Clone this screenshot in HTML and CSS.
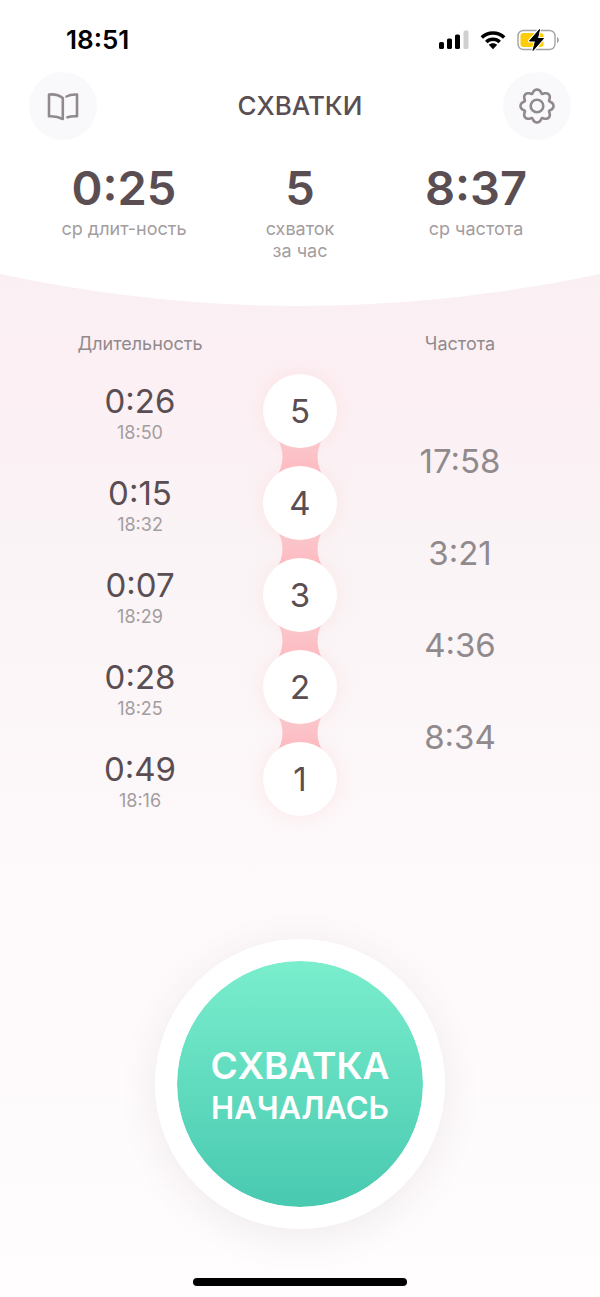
FILE: index.html
```
<!DOCTYPE html>
<html lang="ru">

<head>
    <meta charset="UTF-8">
    <meta name="viewport" content="width=device-width, initial-scale=1.0">
    <title>Схватки</title>
    <link rel="stylesheet" href="styles.css">
</head>

<body>
    <svg class="defs" width="0" height="0" aria-hidden="true">
        <linearGradient id="linkFill" x1="0" y1="0" x2="0" y2="1">
            <stop offset="0" stop-color="#f9cdd2" />
            <stop offset="1" stop-color="#feb9c1" />
        </linearGradient>
        <symbol id="link" viewBox="0 0 50 44">
            <path d="M0 0C10 14 10 30 0 44H50C40 30 40 14 50 0Z" fill="url(#linkFill)" />
        </symbol>
    </svg>

    <header class="header">
        <div class="status-bar">
            <span class="clock">18:51</span>
            <div class="status-icons">
                <svg width="30" height="20" viewBox="0 0 30 20" aria-hidden="true">
                    <rect x="0" y="12" width="5" height="7" rx="1.6" />
                    <rect x="8" y="8.5" width="5" height="10.5" rx="1.6" />
                    <rect x="16" y="4.5" width="5" height="14.5" rx="1.6" />
                    <rect x="24.5" y="0.5" width="5" height="18.5" rx="1.6" fill="#d0d0d0" />
                </svg>
                <svg width="26" height="20" viewBox="0 0 26 20" aria-hidden="true">
                    <path d="M1.8 7.5a16 16 0 0 1 22.4 0M6.3 12a9.6 9.6 0 0 1 13.4 0" fill="none" stroke="#000" stroke-width="3.5" />
                    <path d="M13 13.2c1.7 0 3.2.6 4.2 1.6L13 19.2l-4.2-4.4c1-1 2.5-1.6 4.2-1.6z" />
                </svg>
                <svg width="43" height="22" viewBox="0 0 43 22" aria-hidden="true">
                    <rect x="1" y="1.5" width="37" height="19" rx="5.5" fill="none" stroke="#a3a3a3" stroke-width="1.4" />
                    <path d="M40 8v6c2.4-1 2.4-5 0-6z" fill="#a3a3a3" />
                    <rect x="3.5" y="4" width="23" height="14" rx="3" fill="#ffcc0a" />
                    <path d="M22.5.5L12.5 12h6L16 21.5 26.5 9.5h-6z" stroke="#fff" stroke-width="3" stroke-linejoin="round" />
                    <path d="M22.5.5L12.5 12h6L16 21.5 26.5 9.5h-6z" stroke="#000" stroke-linejoin="round" />
                </svg>
            </div>
        </div>

        <nav class="toolbar">
            <button class="icon-button" aria-label="Справка">
                <svg width="32" height="32" viewBox="0 0 32 32" fill="none" stroke="#918a8d" stroke-width="2.6" stroke-linejoin="round" stroke-linecap="round" aria-hidden="true">
                    <path d="M2 4.5C7 4 12 5 15.8 8v21C12 27 7 26 2 26.3z" />
                    <path d="M19.500 6.500C22 5 26 4.300 30 4.500v21.800c-3.500-.2-6.500 0-9.500 1" />
                </svg>
            </button>
            <h1>СХВАТКИ</h1>
            <button class="icon-button" aria-label="Настройки">
                <svg width="38" height="38" viewBox="-19 -19 38 38" fill="none" stroke="#918a8d" stroke-width="2.6" stroke-linejoin="round" aria-hidden="true">
                    <circle r="6.3" />
                    <path id="gear" d="" />
                </svg>
            </button>
        </nav>

        <section class="stats">
            <div class="stat">
                <strong>0:25</strong>
                <span>ср длит-ность</span>
            </div>
            <div class="stat">
                <strong>5</strong>
                <span>схваток<br>за час</span>
            </div>
            <div class="stat">
                <strong>8:37</strong>
                <span>ср частота</span>
            </div>
        </section>
    </header>
    <svg class="curve" viewBox="0 0 600 32" preserveAspectRatio="none" aria-hidden="true">
        <path d="M0 0Q300 64 600 0Z" fill="#fff" />
    </svg>

    <main>
        <section class="history">
            <h2 class="duration-title">Длительность</h2>
            <h2 class="frequency-title">Частота</h2>

            <ol class="track durations">
                <li><b>0:26</b><time>18:50</time></li>
                <li><b>0:15</b><time>18:32</time></li>
                <li><b>0:07</b><time>18:29</time></li>
                <li><b>0:28</b><time>18:25</time></li>
                <li><b>0:49</b><time>18:16</time></li>
            </ol>

            <ol class="track numbers">
                <li><span>5</span><svg class="link" aria-hidden="true"><use href="#link" /></svg></li>
                <li><span>4</span><svg class="link" aria-hidden="true"><use href="#link" /></svg></li>
                <li><span>3</span><svg class="link" aria-hidden="true"><use href="#link" /></svg></li>
                <li><span>2</span><svg class="link" aria-hidden="true"><use href="#link" /></svg></li>
                <li><span>1</span></li>
            </ol>

            <ol class="track frequencies">
                <li>17:58</li>
                <li>3:21</li>
                <li>4:36</li>
                <li>8:34</li>
            </ol>
        </section>

        <button class="start-button">
            <span class="start-first">СХВАТКА</span>
            <span class="start-second">НАЧАЛАСЬ</span>
        </button>
    </main>

    <div class="home-indicator"></div>

    <script>
        // Eight rounded teeth around the settings wheel
        const points = [];
        for (let i = 0; i < 160; i++) {
            const a = i / 160 * Math.PI * 2;
            const r = 14.8 + 1.7 * Math.cos(a * 8);
            // lean the points outwards so the teeth come out wide and round
            const b = a + 0.05 * Math.sin(a * 8);
            points.push((r * Math.sin(b)).toFixed(2) + ' ' + (-r * Math.cos(b)).toFixed(2));
        }
        document.getElementById('gear').setAttribute('d', 'M' + points.join('L') + 'Z');
    </script>
</body>

</html>
```

FILE: styles.css
```
:root {
    --text: #5a4e53;
    --text-mid: #918a8d;
    --text-dim: #a39d9f;
    --circle: 74px;
    --gap: 18px;
}

* {
    box-sizing: border-box;
    margin: 0;
    padding: 0;
}

body {
    font-family: Inter, 'Liberation Sans', sans-serif;
    color: var(--text);
    min-height: 100vh;
    display: flex;
    flex-direction: column;
    background: linear-gradient(#faeff3 280px, #fcf0f4 390px, #faf4f6 560px, #fdf8fa 850px, #fffdfe);
}

button {
    border: none;
    font-family: inherit;
    cursor: pointer;
}

ol {
    list-style: none;
}

.defs {
    position: absolute;
}

.header {
    background: #fff;
    padding-bottom: 12px;
}

.status-bar {
    display: flex;
    justify-content: space-between;
    align-items: center;
    height: 72px;
    padding: 8px 40px 0 66px;
}

.clock {
    font-size: 26px;
    font-weight: 600;
    line-height: 32px;
    color: #000;
}

.status-icons {
    display: flex;
    align-items: center;
    gap: 11px;
}

.toolbar {
    display: flex;
    justify-content: space-between;
    align-items: center;
    padding: 0 29px;
}

.icon-button {
    display: flex;
    align-items: center;
    justify-content: center;
    width: 68px;
    height: 68px;
    border-radius: 50%;
    background: #f9f9fc;
}

h1 {
    font-size: 26px;
    font-weight: 500;
    line-height: 32px;
}

.stats {
    display: grid;
    grid-template-columns: repeat(3, 1fr);
    padding: 20px 6% 0;
    text-align: center;
}

.stat strong {
    display: block;
    font-size: 47px;
    font-weight: 600;
    line-height: 56px;
}

.stat span {
    display: block;
    margin-top: 2px;
    font-size: 18px;
    line-height: 22px;
    color: var(--text-dim);
}

.curve {
    display: block;
    width: 100%;
    height: 32px;
}

main {
    display: flex;
    flex-direction: column;
    align-items: center;
}

.history {
    display: grid;
    grid-template-columns: repeat(3, 1fr);
    row-gap: 19px;
    width: 80%;
    padding-top: 27px;
    text-align: center;
}

h2 {
    font-size: 18px;
    font-weight: 400;
    line-height: 22px;
    color: var(--text-mid);
}

.frequency-title {
    grid-column: 3;
}

.track {
    display: flex;
    flex-direction: column;
    align-items: center;
    gap: var(--gap);
}

.track li {
    display: flex;
    flex-direction: column;
    align-items: center;
    justify-content: center;
    height: var(--circle);
    font-size: 33px;
    line-height: 40px;
}

.durations {
    padding-top: 2px;
}

.durations b {
    font-weight: 400;
}

.durations time {
    font-size: 18px;
    line-height: 24px;
    color: var(--text-dim);
}

.numbers li {
    position: relative;
    width: var(--circle);
}

.numbers span {
    position: relative;
    z-index: 1;
    width: var(--circle);
    border-radius: 50%;
    background: #fff;
    line-height: var(--circle);
    box-shadow: 0 0 20px rgba(255, 180, 170, 0.22);
}

.link {
    position: absolute;
    top: 61px;
    left: 12px;
    width: 50px;
    height: 44px;
}

.frequencies {
    padding-top: 50px;
    color: var(--text-mid);
}

.start-button {
    display: flex;
    flex-direction: column;
    align-items: center;
    justify-content: center;
    width: 290px;
    height: 290px;
    margin-top: 121px;
    padding-top: 3px;
    border: 22px solid #fff;
    border-radius: 50%;
    background: linear-gradient(#7aeecd, #48c9b0) padding-box;
    box-shadow: 0 8px 40px rgba(60, 40, 50, 0.08);
    color: #fff;
    font-weight: 600;
}

.start-first {
    font-size: 37px;
    line-height: 44px;
}

.start-second {
    font-size: 31px;
    line-height: 40px;
}

.home-indicator {
    width: 214px;
    height: 8px;
    margin: auto auto 11px;
    border-radius: 4px;
    background: #000;
}
```
